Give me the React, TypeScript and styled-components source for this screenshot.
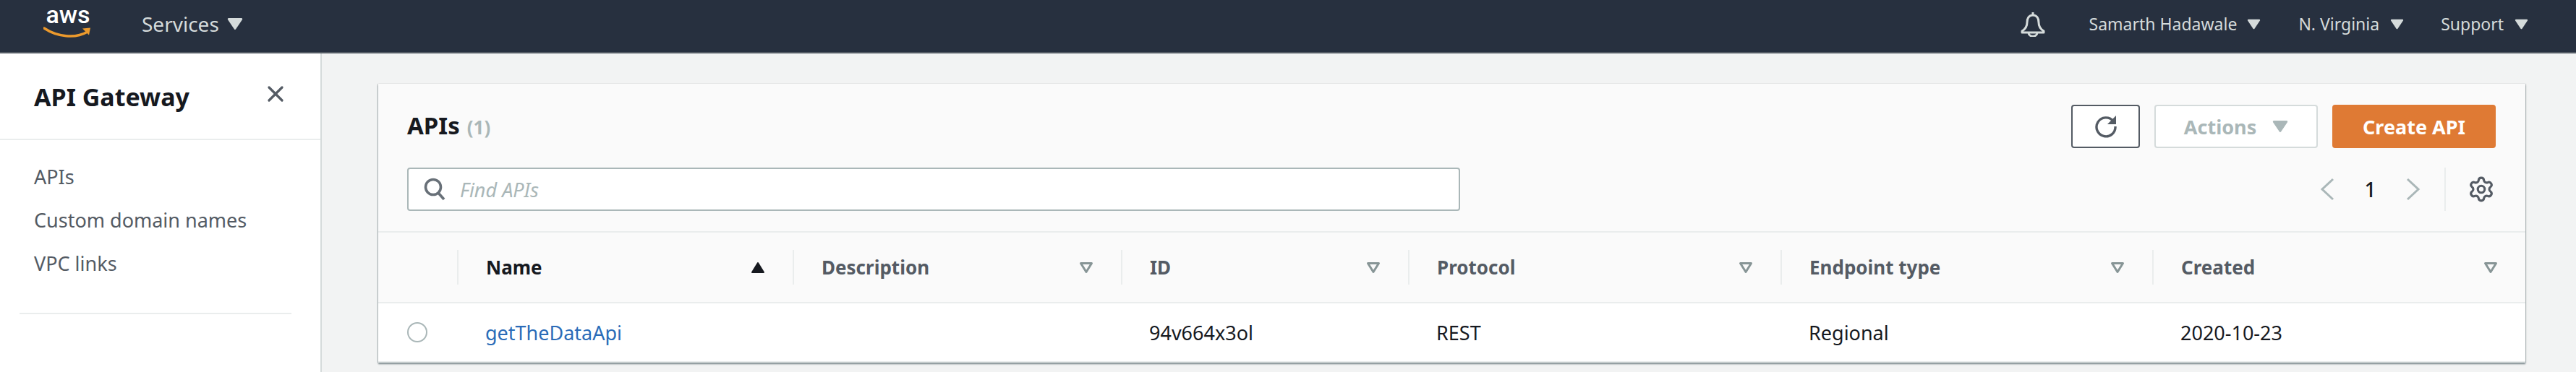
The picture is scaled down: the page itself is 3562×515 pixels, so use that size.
import React, { FC } from 'react';
import styled, { createGlobalStyle } from 'styled-components';
import { Settings, X } from 'lucide-react';

const GlobalStyle = createGlobalStyle`
  html, body {
    margin: 0;
    padding: 0;
    background: #f2f3f3;
  }
  body {
    font-family: "Noto Sans", "Open Sans", Arial, sans-serif;
    color: #16191f;
  }
`;

const Page = styled.div`
  width: 3562px;
  height: 515px;
  overflow: hidden;
  display: flex;
  flex-direction: column;
`;

const TopBar = styled.header`
  flex: none;
  height: 74px;
  box-sizing: border-box;
  display: flex;
  align-items: center;
  padding: 0 66px 6px 60px;
  background: #27303f;
  border-bottom: 2px solid #545b64;
`;

const Logo = styled.div`
  align-self: flex-start;
  width: 68px;
  margin: 8px 68px 0 0;
  display: flex;
  flex-direction: column;
  align-items: center;
`;

const LogoWord = styled.span`
  height: 24px;
  font-family: Roboto, sans-serif;
  font-size: 34px;
  line-height: 24px;
  font-weight: 500;
  color: #fff;
`;

const Smile = styled.svg`
  display: block;
  width: 68px;
  height: 16px;
  margin-top: 5px;
`;

const TopItem = styled.div<{ $size: number; $gap: number; $after: number }>`
  display: flex;
  align-items: center;
  gap: ${p => p.$gap}px;
  margin-right: ${p => p.$after}px;
  color: #d5dbdb;
  font-size: ${p => p.$size}px;
  line-height: 1;
`;

const TopRight = styled.div`
  margin-left: auto;
  display: flex;
  align-items: center;
`;

const Bell = styled.svg`
  display: block;
  width: 36px;
  height: 36px;
  margin-right: 60px;
`;

const CaretIcon = styled.svg<{ $w: number; $h: number }>`
  display: block;
  flex: none;
  width: ${p => p.$w}px;
  height: ${p => p.$h}px;
`;

const Body = styled.div`
  flex: 1;
  display: flex;
  min-height: 0;
`;

const Sidebar = styled.aside`
  flex: none;
  width: 445px;
  box-sizing: border-box;
  background: #fff;
  border-right: 2px solid #d5dbdb;
`;

const SideHead = styled.div`
  height: 120px;
  box-sizing: border-box;
  display: flex;
  justify-content: space-between;
  padding: 38px 44px 0 47px;
  border-bottom: 2px solid #eaeded;
`;

const SideTitle = styled.h2`
  margin: 0;
  font-size: 34px;
  line-height: 44px;
  font-weight: 700;
  color: #16191f;
`;

const CloseButton = styled.div`
  color: #545b64;
  height: 36px;
`;

const SideNav = styled.nav`
  display: flex;
  flex-direction: column;
  padding: 21px 0 0 47px;
`;

const SideLink = styled.a`
  height: 60px;
  font-size: 27px;
  line-height: 60px;
  color: #545b64;
`;

const SideDivider = styled.hr`
  margin: 38px 40px 0 27px;
  border: none;
  border-top: 2px solid #eaeded;
`;

const Main = styled.main`
  flex: 1;
  min-width: 0;
  padding: 42px 70px 0 78px;
`;

const Card = styled.section`
  background: #fff;
  box-shadow: 0 2px 2px 0 rgba(0, 28, 36, 0.5), 1px 0 1px 0 rgba(0, 28, 36, 0.15), -1px 0 1px 0 rgba(0, 28, 36, 0.15);
`;

const CardHead = styled.div`
  height: 206px;
  box-sizing: border-box;
  padding: 28px 41px 0 40px;
  background: #fafafa;
  border-bottom: 2px solid #eaeded;
`;

const HeadRow = styled.div`
  display: flex;
  align-items: center;
  justify-content: space-between;
`;

const Title = styled.h1`
  margin: 0;
  font-size: 33px;
  line-height: 60px;
  font-weight: 700;
  color: #16191f;
`;

const Count = styled.span`
  margin-left: 10px;
  font-size: 26px;
  font-weight: 700;
  color: #aab7b8;
`;

const ButtonRow = styled.div`
  display: flex;
  gap: 20px;
`;

const Button = styled.button<{ $kind: 'icon' | 'disabled' | 'primary' }>`
  box-sizing: border-box;
  width: ${p => (p.$kind === 'icon' ? 95 : 226)}px;
  height: 60px;
  padding: 0;
  display: flex;
  align-items: center;
  justify-content: center;
  gap: 22px;
  border-radius: 4px;
  font-family: inherit;
  font-size: 27px;
  font-weight: 700;
  border: 2px solid
    ${p => (p.$kind === 'icon' ? '#545b64' : p.$kind === 'disabled' ? '#d5dbdb' : '#df7a34')};
  background: ${p => (p.$kind === 'primary' ? '#df7a34' : '#fff')};
  color: ${p => (p.$kind === 'primary' ? '#fff' : '#aab7b8')};
`;

const SearchRow = styled(HeadRow)`
  margin-top: 26px;
`;

const SearchBox = styled.div`
  box-sizing: border-box;
  width: 1456px;
  height: 60px;
  display: flex;
  align-items: center;
  gap: 19px;
  padding-left: 20px;
  background: #fff;
  border: 2px solid #aab7b8;
  border-radius: 4px;
`;

const GlyphIcon = styled.svg`
  display: block;
  flex: none;
  width: 32px;
  height: 32px;
`;

const Placeholder = styled.span`
  font-size: 27px;
  font-style: italic;
  color: #aab7b8;
`;

const Pager = styled.div`
  display: flex;
  align-items: center;
  height: 60px;
`;

const PageNumber = styled.span`
  width: 99px;
  text-align: center;
  font-size: 28px;
  font-weight: 500;
  color: #16191f;
`;

const PagerDivider = styled.div`
  width: 2px;
  height: 60px;
  margin: 0 30px 0 33px;
  background: #eaeded;
`;

const GearWrap = styled.div`
  display: flex;
  margin-right: 1px;
  color: #545b64;
`;

const COLUMNS = '109px 464px 454px 397px 515px 514px 516px';

const HeaderRow = styled.div`
  display: grid;
  grid-template-columns: ${COLUMNS};
  height: 98px;
  box-sizing: border-box;
  padding: 24px 0;
  background: #fafafa;
  border-bottom: 2px solid #eaeded;
`;

const HeaderCell = styled.div<{ $active?: boolean }>`
  display: flex;
  align-items: center;
  justify-content: space-between;
  padding: 0 38px 0 38px;
  border-left: 2px solid #eaeded;
  font-size: 26px;
  font-weight: 700;
  color: ${p => (p.$active ? '#16191f' : '#545b64')};

  &:first-child {
    border-left: none;
  }
`;

const DataRow = styled.div`
  display: grid;
  grid-template-columns: ${COLUMNS};
  height: 80px;
  align-items: center;
  background: #fff;
  border-bottom: 2px solid #eaeded;
`;

const DataCell = styled.div`
  padding-left: 39px;
  font-size: 27px;
  color: #16191f;
`;

const ApiLink = styled.a`
  color: #2b6cb8;
`;

const Radio = styled.span`
  display: block;
  box-sizing: border-box;
  width: 28px;
  height: 28px;
  margin-left: 1px;
  border: 2px solid #aab7b8;
  border-radius: 50%;
  background: #fff;
`;

const Caret: FC<{ w: number; h: number; color: string }> = ({ w, h, color }) => (
  <CaretIcon $w={w} $h={h} viewBox="0 0 20 16">
    <path d="M2 2h16l-8 12z" fill={color} stroke={color} strokeWidth="2.5" strokeLinejoin="round" />
  </CaretIcon>
);

const SortUp: FC = () => (
  <CaretIcon $w={20} $h={17} viewBox="0 0 20 17">
    <path d="M10 2l8 13H2z" fill="#16191f" stroke="#16191f" strokeWidth="2" strokeLinejoin="round" />
  </CaretIcon>
);

const FilterDown: FC = () => (
  <CaretIcon $w={20} $h={17} viewBox="0 0 20 17">
    <path d="M2.5 2.5h15L10 14.5z" fill="none" stroke="#879596" strokeWidth="3" strokeLinejoin="round" />
  </CaretIcon>
);

const Chevron: FC<{ dir: 'left' | 'right' }> = ({ dir }) => (
  <CaretIcon $w={20} $h={32} viewBox="0 0 20 32">
    <path
      d={dir === 'left' ? 'M18 2L3 16l15 14' : 'M2 2l15 14L2 30'}
      fill="none"
      stroke="#aab7b8"
      strokeWidth="3"
    />
  </CaretIcon>
);

const columns = ['Description', 'ID', 'Protocol', 'Endpoint type', 'Created'];

export default function App() {
  return (
    <Page>
      <GlobalStyle />
      <TopBar>
        <Logo>
          <LogoWord>aws</LogoWord>
          <Smile viewBox="0 0 68 16">
            <path d="M1 2c18 12 43 15 60 5" fill="none" stroke="#ec9a2d" strokeWidth="3.4" strokeLinecap="round" />
            <path d="M54 2.5l11-1-2 10z" fill="#ec9a2d" />
          </Smile>
        </Logo>
        <TopItem $size={28} $gap={11} $after={0}>
          Services
          <Caret w={22} h={18} color="#d5dbdb" />
        </TopItem>
        <TopRight>
          <Bell viewBox="0 0 36 36">
            <path
              d="M18 2v4M18 6c-6 0-8 5-8 10 0 6-2 9-7 12v2h30v-2c-5-3-7-6-7-12 0-5-2-10-8-10zM12 30c0 7 12 7 12 0"
              fill="none"
              stroke="#d5dbdb"
              strokeWidth="3"
              strokeLinejoin="round"
            />
          </Bell>
          <TopItem $size={23} $gap={14} $after={52}>
            Samarth Hadawale
            <Caret w={19} h={15} color="#d5dbdb" />
          </TopItem>
          <TopItem $size={23} $gap={15} $after={51}>
            N. Virginia
            <Caret w={19} h={15} color="#d5dbdb" />
          </TopItem>
          <TopItem $size={23} $gap={15} $after={0}>
            Support
            <Caret w={19} h={15} color="#d5dbdb" />
          </TopItem>
        </TopRight>
      </TopBar>
      <Body>
        <Sidebar>
          <SideHead>
            <SideTitle>API Gateway</SideTitle>
            <CloseButton>
              <X size={36} strokeWidth={2.2} />
            </CloseButton>
          </SideHead>
          <SideNav>
            <SideLink>APIs</SideLink>
            <SideLink>Custom domain names</SideLink>
            <SideLink>VPC links</SideLink>
          </SideNav>
          <SideDivider />
        </Sidebar>
        <Main>
          <Card>
            <CardHead>
              <HeadRow>
                <Title>
                  APIs<Count>(1)</Count>
                </Title>
                <ButtonRow>
                  <Button $kind="icon" aria-label="Refresh">
                    <GlyphIcon viewBox="0 0 32 32">
                      <path d="M26 8.5A13 13 0 1 0 29 16" fill="none" stroke="#545b64" strokeWidth="3.4" />
                      <path d="M30 1v12H18z" fill="#545b64" />
                    </GlyphIcon>
                  </Button>
                  <Button $kind="disabled">
                    Actions
                    <Caret w={22} h={18} color="#aab7b8" />
                  </Button>
                  <Button $kind="primary">Create API</Button>
                </ButtonRow>
              </HeadRow>
              <SearchRow>
                <SearchBox>
                  <GlyphIcon viewBox="0 0 32 32">
                    <circle cx="14" cy="13" r="10.5" fill="none" stroke="#687078" strokeWidth="3.6" />
                    <path d="M21 21l8 9" stroke="#687078" strokeWidth="3.6" />
                  </GlyphIcon>
                  <Placeholder>Find APIs</Placeholder>
                </SearchBox>
                <Pager>
                  <Chevron dir="left" />
                  <PageNumber>1</PageNumber>
                  <Chevron dir="right" />
                  <PagerDivider />
                  <GearWrap>
                    <Settings size={38} strokeWidth={2} />
                  </GearWrap>
                </Pager>
              </SearchRow>
            </CardHead>
            <HeaderRow>
              <HeaderCell />
              <HeaderCell $active>
                Name
                <SortUp />
              </HeaderCell>
              {columns.map(name => (
                <HeaderCell key={name}>
                  {name}
                  <FilterDown />
                </HeaderCell>
              ))}
            </HeaderRow>
            <DataRow>
              <DataCell>
                <Radio />
              </DataCell>
              <DataCell>
                <ApiLink>getTheDataApi</ApiLink>
              </DataCell>
              <DataCell />
              <DataCell>94v664x3ol</DataCell>
              <DataCell>REST</DataCell>
              <DataCell>Regional</DataCell>
              <DataCell>2020-10-23</DataCell>
            </DataRow>
          </Card>
        </Main>
      </Body>
    </Page>
  );
}
